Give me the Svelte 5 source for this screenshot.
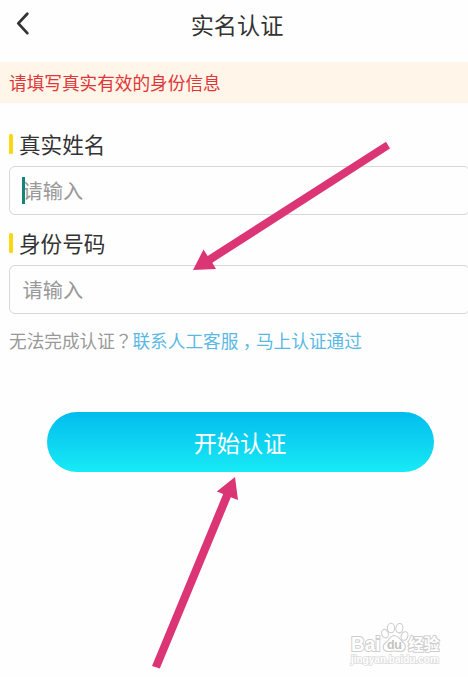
<script>
	let fields = $state([
		{ id: 'name', label: '真实姓名', focused: true },
		{ id: 'idcard', label: '身份号码', focused: false }
	]);
</script>

<div class="page">
	<header>
		<svg class="back" viewBox="0 0 16 26" aria-hidden="true">
			<path d="M12.3 2.7 3.3 12.4l9 9.7" />
		</svg>
		<h1>实名认证</h1>
	</header>

	<p class="notice">请填写真实有效的身份信息</p>

	<main>
		{#each fields as field (field.id)}
			<section class="field">
				<h2><span class="bar"></span>{field.label}</h2>
				<div class="input">
					<span class="placeholder">请输入</span>
					{#if field.focused}
						<span class="caret"></span>
					{/if}
				</div>
			</section>
		{/each}

		<p class="help">
			无法完成认证<span class="question">？</span><span class="link"
				>联系人工客服<span class="comma">，</span>马上认证通过</span
			>
		</p>
		<button>开始认证</button>
	</main>

	<svg class="overlay" viewBox="0 0 468 677" aria-hidden="true">
		<g class="arrow">
			<path d="M386 141.7 390 148.6 212.3 262.7 216 269 193 270 203.5 249.5 207.7 256Z" />
			<path d="M152 666 223.2 494 216.8 491.6 235 477 238 500 230.8 497.3 159.8 668.6Z" />
		</g>
		<g class="watermark">
			<text x="351" y="650.7" font-size="19.8" textLength="29.5" lengthAdjust="spacingAndGlyphs">Bai</text>
			<ellipse cx="385" cy="633.7" rx="3.3" ry="4.4" transform="rotate(-18 385 633.7)" />
			<ellipse cx="391" cy="628" rx="3.6" ry="4.8" />
			<ellipse cx="399.4" cy="628.2" rx="3.5" ry="4.7" transform="rotate(8 399.4 628.2)" />
			<ellipse cx="404.5" cy="636" rx="3.3" ry="4.4" transform="rotate(18 404.5 636)" />
			<path d="M394.2 635.5c-4 0-4.5 3.5-7 5.7-3 2.2-5 4-3.8 7.3 1.2 3.2 4 3.3 7 2.9 3-.5 5-.5 8 0 3.4.5 6-.2 6.9-3.4.7-3-1-4.9-3.4-7-2.4-2-3.7-5.5-7.7-5.5Z" />
			<text class="du" x="387" y="648.8" font-size="12.5" textLength="15">du</text>
			<text class="cn" x="408.3" y="650" font-size="15.5">经验</text>
			<text class="url" x="351" y="663" font-size="10.2" textLength="88">jingyan.baidu.com</text>
		</g>
	</svg>
</div>

<style>
	:global(body) {
		margin: 0;
		background: #fefefe;
		overflow: hidden;
	}

	.page {
		position: relative;
		width: 468px;
		height: 677px;
		overflow: hidden;
		font-family: 'Noto Sans CJK SC', 'Noto Sans', sans-serif;
		color: #333;
	}

	header {
		display: grid;
		grid-template-columns: 48px 1fr 42px;
		align-items: center;
		height: 62px;
		padding-bottom: 15px;
		box-sizing: border-box;
	}

	.back {
		width: 16px;
		height: 26px;
		margin-left: 15px;
		fill: none;
		stroke: #333;
		stroke-width: 2.8;
		stroke-linecap: round;
		stroke-linejoin: round;
	}

	h1 {
		margin: 0;
		font-size: 23.2px;
		font-weight: 400;
		line-height: 30px;
		text-align: center;
	}

	.notice {
		margin: 0;
		height: 41px;
		padding-left: 9px;
		background: #fff5e8;
		color: #df3638;
		font-size: 17.65px;
		line-height: 41px;
	}

	main {
		display: flex;
		flex-direction: column;
		padding: 27px 0 0 9px;
	}

	.field {
		height: 99px;
	}

	h2 {
		display: flex;
		align-items: center;
		gap: 6px;
		margin: 0;
		height: 36px;
		padding-bottom: 8px;
		box-sizing: border-box;
		font-size: 21.6px;
		font-weight: 400;
		line-height: 28px;
	}

	.bar {
		width: 4px;
		height: 20px;
		border-radius: 1.5px;
		background: #fad70f;
	}

	.input {
		position: relative;
		display: flex;
		align-items: center;
		width: 461px;
		height: 49px;
		padding-left: 12.5px;
		box-sizing: border-box;
		border: 1px solid #d8d8d8;
		border-radius: 6px;
	}

	.placeholder {
		font-size: 20.2px;
		line-height: 28px;
		color: #999;
	}

	.caret {
		position: absolute;
		left: 12px;
		top: 10px;
		width: 3px;
		height: 27px;
		background: #12867b;
	}

	.help {
		margin: 0;
		height: 26px;
		font-size: 17.65px;
		line-height: 26px;
		color: #999;
		white-space: nowrap;
	}

	.question {
		font-family: 'Noto Sans CJK TC', sans-serif;
	}

	.link {
		color: #5ab9e4;
	}

	/* half-width comma, centred in a full cell */
	.comma {
		padding: 0 0.25em;
		font-feature-settings: 'halt';
	}

	button {
		width: 387px;
		height: 60px;
		margin: 58px 0 0 37.5px;
		padding: 0 0 1px;
		border: 0;
		border-radius: 30px;
		background: linear-gradient(#02bced, #18eaf5);
		color: #fff;
		font-family: inherit;
		font-size: 23.2px;
	}

	.overlay {
		position: absolute;
		inset: 0;
		width: 468px;
		height: 677px;
		pointer-events: none;
	}

	.arrow {
		fill: #dc3575;
	}

	.watermark {
		fill: #fff;
		stroke: #cecece;
		stroke-width: 1.1;
		font-family: 'Liberation Sans', 'Noto Sans CJK SC', sans-serif;
		font-weight: 700;
	}

	.watermark text {
		stroke-width: 2;
		paint-order: stroke;
	}

	.watermark .cn {
		font-family: 'Noto Sans CJK SC', sans-serif;
	}

	.watermark .du {
		fill: #c2c2c2;
		stroke: none;
	}

	.watermark .url {
		stroke: #dcdcdc;
		stroke-width: 1.6;
	}
</style>
